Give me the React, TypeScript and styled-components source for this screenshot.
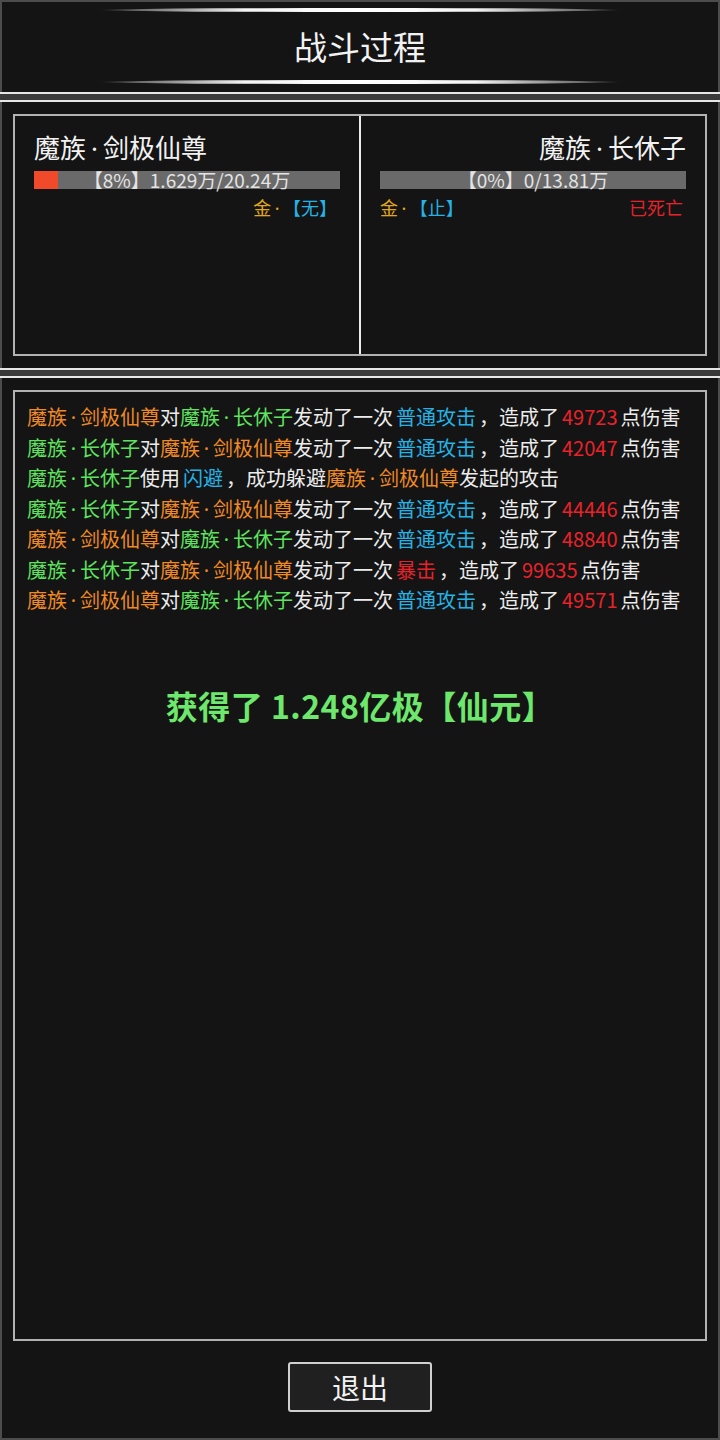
import React from "react";
import styled, { createGlobalStyle } from "styled-components";

const GlobalStyle = createGlobalStyle`
  html, body {
    margin: 0;
    padding: 0;
    background: #141414;
  }
  * {
    box-sizing: border-box;
  }
`;

type Tone = "white" | "orange" | "green" | "blue" | "red" | "gold";

const toneColor: Record<Tone, string> = {
  white: "#ececec",
  orange: "#f08a24",
  green: "#5ee35e",
  blue: "#25b2e4",
  red: "#e8222a",
  gold: "#e2a81c",
};

const Page = styled.div`
  width: 720px;
  height: 1440px;
  display: flex;
  flex-direction: column;
  background: #141414;
  box-shadow: inset 0 0 0 2px #4c4c4c;
  font-family: "Noto Sans CJK SC", "Noto Sans", sans-serif;
  color: #ececec;
`;

const Header = styled.div`
  height: 94px;
  display: flex;
  flex-direction: column;
  align-items: center;
  justify-content: space-between;
  padding: 8px 0 8px;
  border-bottom: 2px solid #e6e6e6;
`;

const GlowLine = styled.div`
  width: 520px;
  height: 4px;
  border-radius: 50%;
  background: linear-gradient(
    to right,
    rgba(255, 255, 255, 0) 0%,
    rgba(200, 200, 200, 0.5) 8%,
    #f4f4f4 28%,
    #ffffff 50%,
    #f4f4f4 72%,
    rgba(200, 200, 200, 0.5) 92%,
    rgba(255, 255, 255, 0) 100%
  );
`;

const Title = styled.div`
  font-size: 33px;
  line-height: 40px;
  font-weight: 400;
  color: #f2f2f2;
`;

const Band = styled.div`
  height: 6px;
  background: #3a3a3a;
`;

const InfoPanel = styled.div`
  border-top: 2px solid #e6e6e6;
  border-bottom: 2px solid #e6e6e6;
  padding: 12px 13px;
`;

const Cards = styled.div`
  height: 242px;
  display: flex;
  border: 2px solid #b2b2b2;
`;

const Card = styled.div<{ $right?: boolean }>`
  flex: 1;
  display: flex;
  flex-direction: column;
  padding: 13px 19px 0;
  border-left: ${(p) => (p.$right ? "2px solid #ececec" : "none")};
`;

const Name = styled.div<{ $right?: boolean }>`
  font-size: 26px;
  line-height: 36px;
  text-align: ${(p) => (p.$right ? "right" : "left")};
  color: #f2f2f2;
`;

// the separator dot is narrower than a full CJK cell
const Dot = styled.span`
  display: inline-block;
  width: 0.65em;
  line-height: 1;
  text-align: center;
  font-family: "Noto Sans", sans-serif;
`;

const HpBar = styled.div`
  position: relative;
  margin-top: 6px;
  height: 18px;
  background: #6a6a6a;
`;

const HpFill = styled.div`
  height: 100%;
  background: #f04a2a;
`;

const HpText = styled.div`
  position: absolute;
  inset: 0;
  display: flex;
  align-items: center;
  justify-content: center;
  font-size: 19px;
  line-height: 18px;
  color: #e4e4e4;
`;

const StatusRow = styled.div<{ $align: string }>`
  display: flex;
  justify-content: ${(p) => p.$align};
  margin-top: 5px;
  font-size: 18px;
  line-height: 26px;
  padding-right: 3px;
`;

const Tag = styled.span<{ $tone: Tone; $gap?: boolean }>`
  color: ${(p) => toneColor[p.$tone]};
  margin: ${(p) => (p.$gap ? "0 3px" : "0")};
`;

const LogPanel = styled.div`
  flex: 1;
  display: flex;
  flex-direction: column;
  border-top: 2px solid #e6e6e6;
  padding: 12px 13px 0;
`;

const LogBox = styled.div`
  flex: 1;
  border: 2px solid #b2b2b2;
  padding: 10px 12px 0;
`;

const LogLine = styled.div`
  font-size: 20px;
  line-height: 30.5px;
  height: 30.5px;
  white-space: nowrap;
  color: #ececec;
`;

const Reward = styled.div`
  margin-top: 69px;
  text-align: center;
  font-size: 32px;
  line-height: 40px;
  font-weight: 700;
  letter-spacing: 0.5px;
  color: #6ee86c;
`;

const Footer = styled.div`
  display: flex;
  justify-content: center;
  padding: 21px 0 28px;
`;

const ExitButton = styled.button`
  width: 144px;
  height: 50px;
  border: 2px solid #d0d0d0;
  border-radius: 3px;
  background: #202020;
  color: #f2f2f2;
  font-family: "Noto Sans CJK SC", "Noto Sans", sans-serif;
  font-size: 28px;
  line-height: 1;
  padding: 0;
  cursor: pointer;
`;

// [text, colour, extra spacing]
type Seg = [string, Tone, boolean?];

const A = "魔族·剑极仙尊";
const B = "魔族·长休子";

const withDots = (text: string) =>
  text.split("·").flatMap((part, i) => (i === 0 ? [part] : [<Dot key={i}>·</Dot>, part]));

const attack = (from: string, fromTone: Tone, to: string, toTone: Tone, skill: string, skillTone: Tone, dmg: string): Seg[] => [
  [from, fromTone],
  ["对", "white"],
  [to, toTone],
  ["发动了一次", "white"],
  [skill, skillTone, true],
  ["，造成了", "white"],
  [dmg, "red", true],
  ["点伤害", "white"],
];

const logs: Seg[][] = [
  attack(A, "orange", B, "green", "普通攻击", "blue", "49723"),
  attack(B, "green", A, "orange", "普通攻击", "blue", "42047"),
  [
    [B, "green"],
    ["使用", "white"],
    ["闪避", "blue", true],
    ["，成功躲避", "white"],
    [A, "orange"],
    ["发起的攻击", "white"],
  ],
  attack(B, "green", A, "orange", "普通攻击", "blue", "44446"),
  attack(A, "orange", B, "green", "普通攻击", "blue", "48840"),
  attack(B, "green", A, "orange", "暴击", "red", "99635"),
  attack(A, "orange", B, "green", "普通攻击", "blue", "49571"),
];

const App: React.FC = () => {
  const leftHp = 8; // percent

  return (
    <Page>
      <GlobalStyle />
      <Header>
        <GlowLine />
        <Title>战斗过程</Title>
        <GlowLine />
      </Header>
      <Band />
      <InfoPanel>
        <Cards>
          <Card>
            <Name>{withDots(A)}</Name>
            <HpBar>
              <HpFill style={{ width: `${leftHp}%` }} />
              <HpText>【8%】1.629万/20.24万</HpText>
            </HpBar>
            <StatusRow $align="flex-end">
              <span>
                <Tag $tone="gold">金<Dot>·</Dot></Tag>
                <Tag $tone="blue">【无】</Tag>
              </span>
            </StatusRow>
          </Card>
          <Card $right>
            <Name $right>{withDots(B)}</Name>
            <HpBar>
              <HpFill style={{ width: "0%" }} />
              <HpText>【0%】0/13.81万</HpText>
            </HpBar>
            <StatusRow $align="space-between">
              <span>
                <Tag $tone="gold">金<Dot>·</Dot></Tag>
                <Tag $tone="blue">【止】</Tag>
              </span>
              <Tag $tone="red">已死亡</Tag>
            </StatusRow>
          </Card>
        </Cards>
      </InfoPanel>
      <Band />
      <LogPanel>
        <LogBox>
          {logs.map((line, i) => (
            <LogLine key={i}>
              {line.map(([text, tone, gap], j) => (
                <Tag key={j} $tone={tone} $gap={gap}>
                  {withDots(text)}
                </Tag>
              ))}
            </LogLine>
          ))}
          <Reward>获得了 1.248亿极【仙元】</Reward>
        </LogBox>
        <Footer>
          <ExitButton>退出</ExitButton>
        </Footer>
      </LogPanel>
    </Page>
  );
};

export default App;
